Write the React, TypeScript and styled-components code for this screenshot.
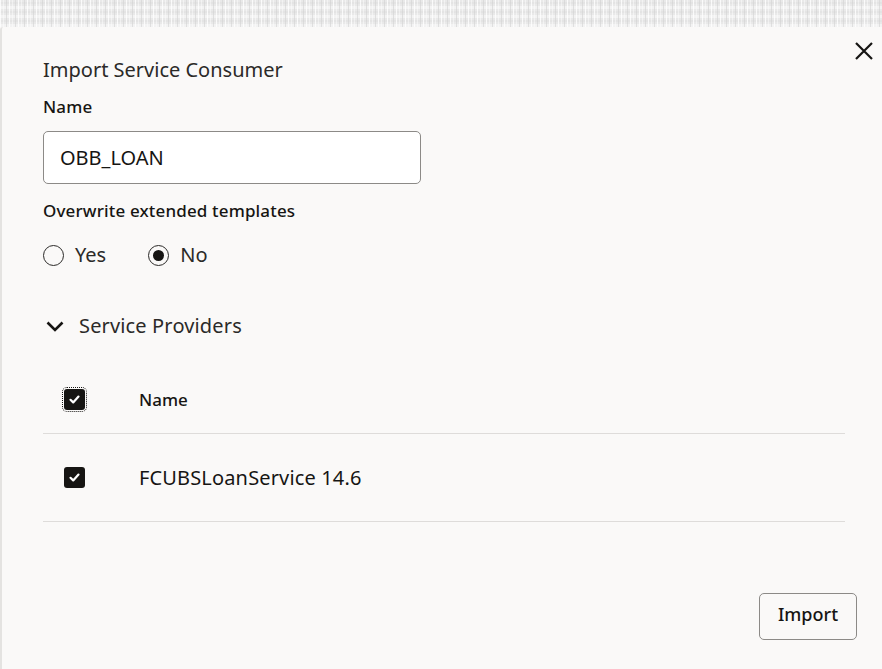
import React from "react";
import styled, { createGlobalStyle } from "styled-components";

const Global = createGlobalStyle`
  html, body { margin: 0; padding: 0; }
  body { background: #faf9f8; font-family: "Noto Sans", "Open Sans", sans-serif; color: #161513; }
  * { box-sizing: border-box; }
`;

const Page = styled.div`
  width: 882px;
  height: 669px;
  display: flex;
  flex-direction: column;
  overflow: hidden;
`;

const Backdrop = styled.div`
  height: 27px;
  flex: none;
  background-color: #e9e9e9;
  background-image:
    repeating-linear-gradient(90deg, rgba(255,255,255,0.8) 0 1px, transparent 1px 3px, rgba(255,255,255,0.45) 3px 4px, transparent 4px 6px, rgba(210,210,210,0.6) 6px 7px, transparent 7px 9px),
    repeating-linear-gradient(0deg, rgba(255,255,255,0.45) 0 3px, transparent 3px 5px, rgba(220,220,220,0.4) 5px 7px, transparent 7px 9px);
`;

const Dialog = styled.div`
  flex: 1;
  background: #faf9f8;
  border-left: 2px solid #e4e3e1;
  border-top-left-radius: 3px;
  display: flex;
  flex-direction: column;
  padding: 0 6px 29px 41px;
`;

const Header = styled.div`
  display: flex;
  justify-content: space-between;
  align-items: flex-start;
`;

const Title = styled.h1`
  margin: 31px 0 0;
  font-size: 20px;
  line-height: 24px;
  font-weight: 400;
  color: #2b2a28;
`;

const CloseButton = styled.button`
  margin-top: 12px;
  width: 24px;
  height: 24px;
  padding: 0;
  border: none;
  background: none;
  display: flex;
  align-items: center;
  justify-content: center;
  cursor: pointer;
`;

const Label = styled.div<{ $mt: number }>`
  margin-top: ${(p) => p.$mt}px;
  font-size: 17px;
  line-height: 20px;
  font-weight: 500;
  letter-spacing: 0.15px;
  color: #161513;
`;

const Input = styled.input`
  margin-top: 14px;
  width: 378px;
  height: 53px;
  border: 1px solid #8c8a87;
  border-radius: 5px;
  background: #fff;
  padding: 0 16px;
  font-family: "Noto Sans", sans-serif;
  font-size: 20px;
  color: #161513;
  outline: none;
`;

const RadioRow = styled.div`
  margin-top: 22px;
  display: flex;
  align-items: center;
  gap: 42px;
  height: 24px;
`;

const RadioOption = styled.label`
  display: flex;
  align-items: center;
  gap: 11px;
  font-size: 20px;
  line-height: 24px;
  color: #2b2a28;
`;

const RadioCircle = styled.span<{ $checked?: boolean }>`
  width: 21px;
  height: 21px;
  border-radius: 50%;
  border: 1.5px solid #2b2a28;
  display: flex;
  align-items: center;
  justify-content: center;
  &::after {
    content: "";
    width: 11px;
    height: 11px;
    border-radius: 50%;
    background: #161513;
    display: ${(p) => (p.$checked ? "block" : "none")};
  }
`;

const SectionHeader = styled.div`
  margin-top: 47px;
  display: flex;
  align-items: center;
  gap: 13px;
  font-size: 20px;
  line-height: 24px;
  letter-spacing: 0.15px;
  color: #2b2a28;
  padding-left: 1px;
`;

const Table = styled.div`
  margin-top: 28px;
  width: 802px;
  display: flex;
  flex-direction: column;
`;

const Row = styled.div<{ $h: number }>`
  height: ${(p) => p.$h}px;
  display: grid;
  grid-template-columns: 96px 1fr;
  align-items: center;
  border-bottom: 1px solid #dedcda;
`;

const CheckCell = styled.div`
  padding-left: 21px;
  display: flex;
  align-items: center;
`;

const Check = styled.span<{ $focus?: boolean }>`
  width: 21px;
  height: 21px;
  border-radius: 3px;
  background: #161513;
  display: flex;
  align-items: center;
  justify-content: center;
  outline: ${(p) => (p.$focus ? "1px dotted #161513" : "none")};
  outline-offset: 1px;
`;

const HeadText = styled.div`
  font-size: 17px;
  font-weight: 500;
  color: #161513;
`;

const CellText = styled.div`
  font-size: 20px;
  letter-spacing: 0.15px;
  color: #161513;
`;

const Footer = styled.div`
  margin-top: auto;
  display: flex;
  justify-content: flex-end;
  padding-right: 19px;
`;

const Button = styled.button`
  width: 98px;
  height: 47px;
  border: 1px solid #8c8a87;
  border-radius: 5px;
  background: #faf9f8;
  font-family: "Noto Sans", sans-serif;
  font-size: 18px;
  line-height: 22px;
  font-weight: 500;
  color: #161513;
  padding: 0 0 5px;
`;

const CheckMark = () => (
  <svg width="13" height="13" viewBox="0 0 13 13">
    <path d="M2.5 6.8 L5.2 9.4 L10.5 3.6" fill="none" stroke="#fff" strokeWidth="2.2" strokeLinecap="round" strokeLinejoin="round" />
  </svg>
);

export default function App() {
  return (
    <Page>
      <Global />
      <Backdrop />
      <Dialog>
        <Header>
          <Title>Import Service Consumer</Title>
          <CloseButton aria-label="Close">
            <svg width="20" height="20" viewBox="0 0 20 20">
              <path d="M2 2 L18 18 M18 2 L2 18" stroke="#161513" strokeWidth="2.2" />
            </svg>
          </CloseButton>
        </Header>
        <Label $mt={15}>Name</Label>
        <Input defaultValue="OBB_LOAN" />
        <Label $mt={17}>Overwrite extended templates</Label>
        <RadioRow>
          <RadioOption>
            <RadioCircle />
            Yes
          </RadioOption>
          <RadioOption>
            <RadioCircle $checked />
            No
          </RadioOption>
        </RadioRow>
        <SectionHeader>
          <svg width="22" height="22" viewBox="0 0 22 22">
            <path d="M3.5 7.5 L11 15 L18.5 7.5" fill="none" stroke="#161513" strokeWidth="2.6" />
          </svg>
          Service Providers
        </SectionHeader>
        <Table>
          <Row $h={68}>
            <CheckCell>
              <Check $focus>
                <CheckMark />
              </Check>
            </CheckCell>
            <HeadText>Name</HeadText>
          </Row>
          <Row $h={88}>
            <CheckCell>
              <Check>
                <CheckMark />
              </Check>
            </CheckCell>
            <CellText>FCUBSLoanService 14.6</CellText>
          </Row>
        </Table>
        <Footer>
          <Button>Import</Button>
        </Footer>
      </Dialog>
    </Page>
  );
}
